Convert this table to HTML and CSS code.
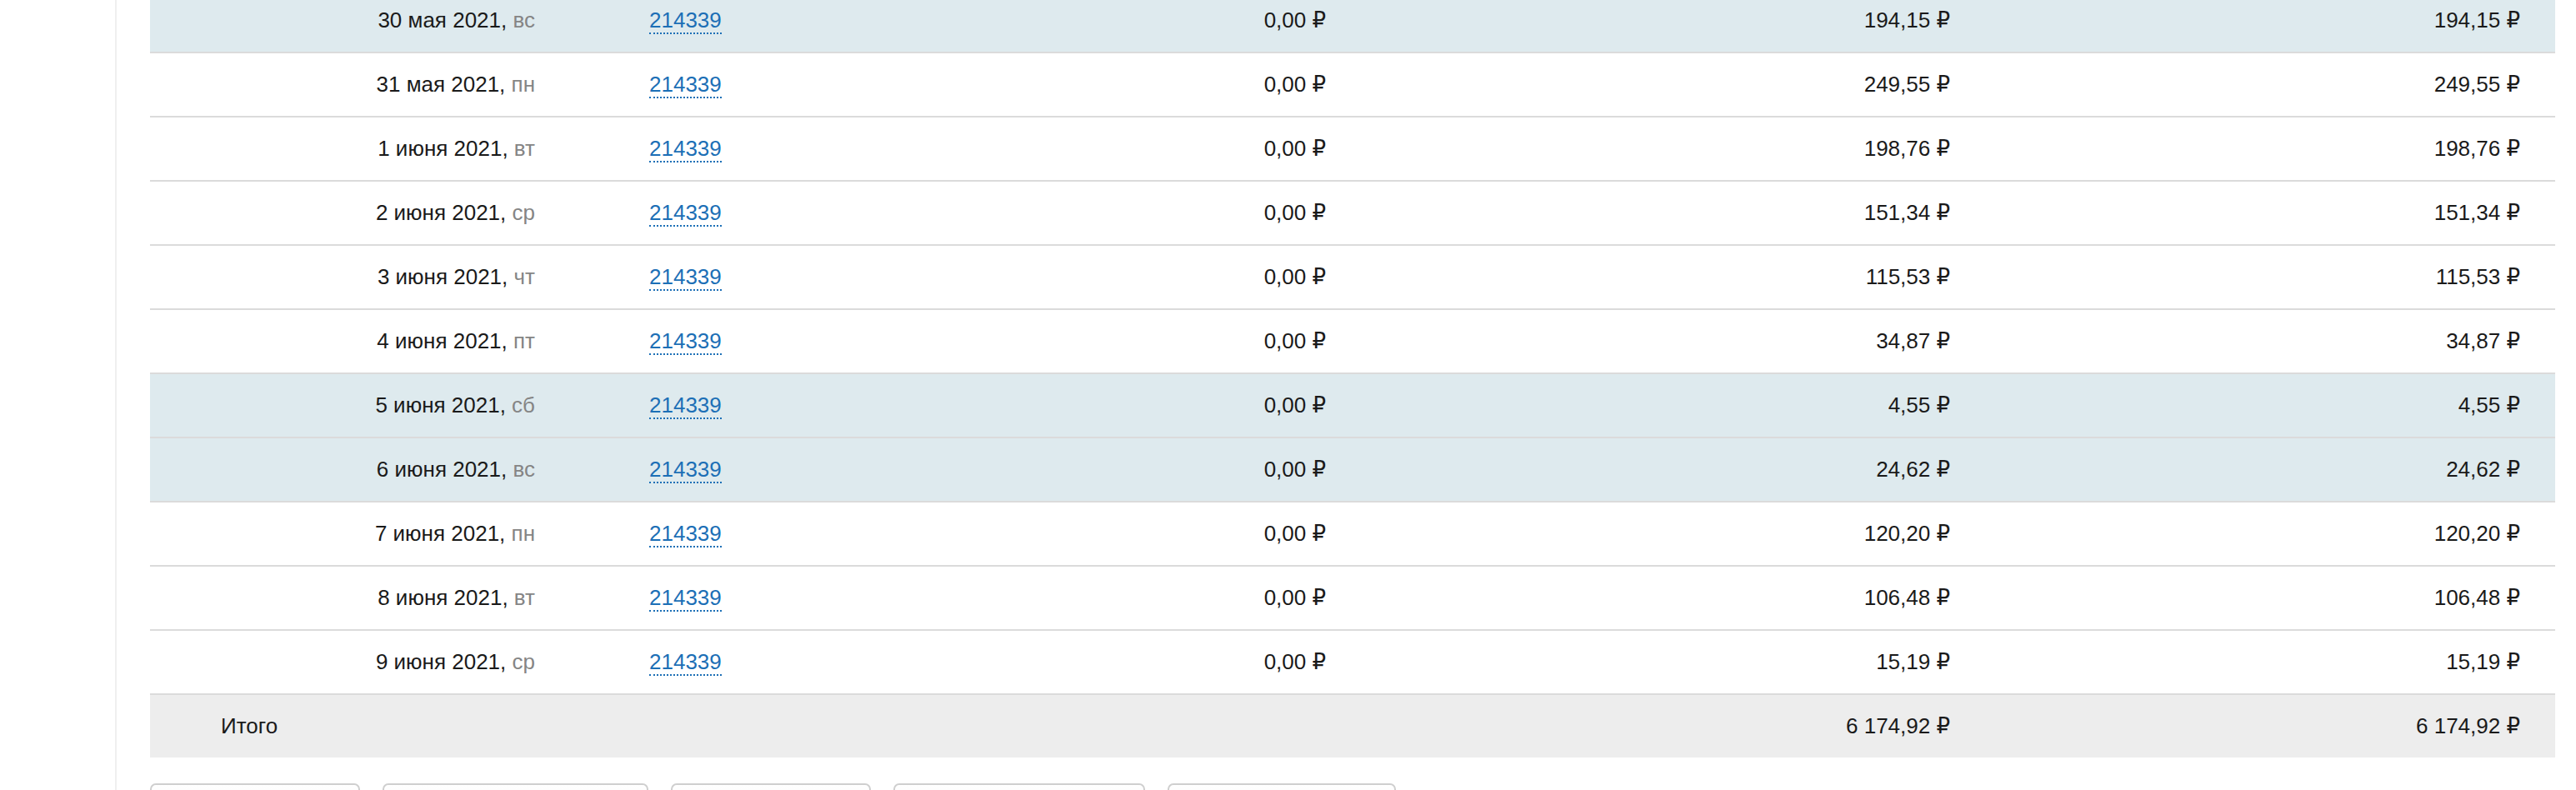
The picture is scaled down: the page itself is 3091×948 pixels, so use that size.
FILE: index.html
```html
<!DOCTYPE html>
<html lang="ru">
<head>
  <meta charset="UTF-8">
  <title>Отчёт по дням</title>
  <link rel="stylesheet" href="styles.css">
</head>
<body>
  <div class="layout">
    <aside class="sidebar"></aside>
    <main class="content">
      <div class="report">
        <div class="row weekend">
          <div class="cell date">30 мая 2021, <span class="dow">вс</span></div>
          <div class="cell order"><a href="#">214339</a></div>
          <div class="cell num">0,00&nbsp;₽</div>
          <div class="cell num">194,15&nbsp;₽</div>
          <div class="cell num">194,15&nbsp;₽</div>
        </div>
        <div class="row">
          <div class="cell date">31 мая 2021, <span class="dow">пн</span></div>
          <div class="cell order"><a href="#">214339</a></div>
          <div class="cell num">0,00&nbsp;₽</div>
          <div class="cell num">249,55&nbsp;₽</div>
          <div class="cell num">249,55&nbsp;₽</div>
        </div>
        <div class="row">
          <div class="cell date">1 июня 2021, <span class="dow">вт</span></div>
          <div class="cell order"><a href="#">214339</a></div>
          <div class="cell num">0,00&nbsp;₽</div>
          <div class="cell num">198,76&nbsp;₽</div>
          <div class="cell num">198,76&nbsp;₽</div>
        </div>
        <div class="row">
          <div class="cell date">2 июня 2021, <span class="dow">ср</span></div>
          <div class="cell order"><a href="#">214339</a></div>
          <div class="cell num">0,00&nbsp;₽</div>
          <div class="cell num">151,34&nbsp;₽</div>
          <div class="cell num">151,34&nbsp;₽</div>
        </div>
        <div class="row">
          <div class="cell date">3 июня 2021, <span class="dow">чт</span></div>
          <div class="cell order"><a href="#">214339</a></div>
          <div class="cell num">0,00&nbsp;₽</div>
          <div class="cell num">115,53&nbsp;₽</div>
          <div class="cell num">115,53&nbsp;₽</div>
        </div>
        <div class="row">
          <div class="cell date">4 июня 2021, <span class="dow">пт</span></div>
          <div class="cell order"><a href="#">214339</a></div>
          <div class="cell num">0,00&nbsp;₽</div>
          <div class="cell num">34,87&nbsp;₽</div>
          <div class="cell num">34,87&nbsp;₽</div>
        </div>
        <div class="row weekend">
          <div class="cell date">5 июня 2021, <span class="dow">сб</span></div>
          <div class="cell order"><a href="#">214339</a></div>
          <div class="cell num">0,00&nbsp;₽</div>
          <div class="cell num">4,55&nbsp;₽</div>
          <div class="cell num">4,55&nbsp;₽</div>
        </div>
        <div class="row weekend">
          <div class="cell date">6 июня 2021, <span class="dow">вс</span></div>
          <div class="cell order"><a href="#">214339</a></div>
          <div class="cell num">0,00&nbsp;₽</div>
          <div class="cell num">24,62&nbsp;₽</div>
          <div class="cell num">24,62&nbsp;₽</div>
        </div>
        <div class="row">
          <div class="cell date">7 июня 2021, <span class="dow">пн</span></div>
          <div class="cell order"><a href="#">214339</a></div>
          <div class="cell num">0,00&nbsp;₽</div>
          <div class="cell num">120,20&nbsp;₽</div>
          <div class="cell num">120,20&nbsp;₽</div>
        </div>
        <div class="row">
          <div class="cell date">8 июня 2021, <span class="dow">вт</span></div>
          <div class="cell order"><a href="#">214339</a></div>
          <div class="cell num">0,00&nbsp;₽</div>
          <div class="cell num">106,48&nbsp;₽</div>
          <div class="cell num">106,48&nbsp;₽</div>
        </div>
        <div class="row">
          <div class="cell date">9 июня 2021, <span class="dow">ср</span></div>
          <div class="cell order"><a href="#">214339</a></div>
          <div class="cell num">0,00&nbsp;₽</div>
          <div class="cell num">15,19&nbsp;₽</div>
          <div class="cell num">15,19&nbsp;₽</div>
        </div>
        <div class="row total">
          <div class="cell label">Итого</div>
          <div class="cell"></div>
          <div class="cell"></div>
          <div class="cell num">6&nbsp;174,92&nbsp;₽</div>
          <div class="cell num">6&nbsp;174,92&nbsp;₽</div>
        </div>
      </div>
      <div class="actions">
        <button class="btn w1" aria-label="Печать"></button>
        <button class="btn w2" aria-label="Экспорт в Excel"></button>
        <button class="btn w3" aria-label="Экспорт в CSV"></button>
        <button class="btn w4" aria-label="Отправить"></button>
        <button class="btn w5" aria-label="Назад"></button>
      </div>
    </main>
  </div>
</body>
</html>
```

FILE: styles.css
```css
:root {
  --text: #1a1a1a;
  --muted: #858585;
  --link: #1c6fb6;
  --line: #dbdbdb;
  --weekend: #deeaee;
  --total: #ededed;
}
* { box-sizing: border-box; margin: 0; padding: 0; }
html, body { height: 100%; overflow: hidden; }
body {
  background: #fff;
  color: var(--text);
  font-family: 'Liberation Sans', Arial, 'DejaVu Sans', sans-serif;
  font-size: 26px;
}
.layout { display: flex; min-height: 100%; }
.sidebar {
  width: 140px;
  flex: none;
  border-right: 2px solid #efefef;
}
.content { flex: 1; padding: 0 25px 40px 40px; }
.report { margin-top: -13px; }
.row {
  display: grid;
  grid-template-columns: 504px 516px 433px 749px 684px;
  height: 77px;
  align-items: center;
  border-bottom: 2px solid var(--line);
}
.row.weekend { background: var(--weekend); }
.row.total { background: var(--total); border-bottom: none; height: 75px; }
.cell { padding: 0 42px; white-space: nowrap; }
.date, .num { text-align: right; }
.dow { color: var(--muted); }
.order { padding-left: 95px; }
.order a {
  color: var(--link);
  text-decoration: none;
  border-bottom: 2px dotted var(--link);
}
.label { padding-left: 85px; }
.actions { display: flex; gap: 27px; margin-top: 31px; }
.btn {
  height: 54px;
  background: linear-gradient(#fff, #f4f4f4);
  border: 2px solid #cfcfcf;
  border-radius: 7px;
}
.w1 { width: 252px; }
.w2 { width: 319px; }
.w3 { width: 240px; }
.w4 { width: 302px; }
.w5 { width: 274px; }
```
